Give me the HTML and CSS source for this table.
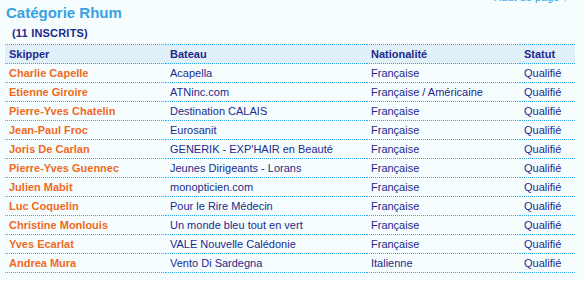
FILE: index.html
```html
<!DOCTYPE html>
<html lang="fr">
<head>
    <meta charset="UTF-8">
    <title>Catégorie Rhum</title>
    <link rel="stylesheet" href="styles.css">
</head>
<body>
    <div class="page">
        <a class="top-link" href="#">Haut de page ↑</a>
        <h2>Catégorie Rhum</h2>
        <p class="count">(11 INSCRITS)</p>
        <table class="list">
            <thead>
                <tr><th class="c1">Skipper</th><th class="c2">Bateau</th><th class="c3">Nationalité</th><th class="c4">Statut</th></tr>
            </thead>
            <tbody>
                <tr><td class="name">Charlie Capelle</td><td>Acapella</td><td>Française</td><td>Qualifié</td></tr>
                <tr><td class="name">Etienne Giroire</td><td>ATNinc.com</td><td>Française / Américaine</td><td>Qualifié</td></tr>
                <tr><td class="name">Pierre-Yves Chatelin</td><td>Destination CALAIS</td><td>Française</td><td>Qualifié</td></tr>
                <tr><td class="name">Jean-Paul Froc</td><td>Eurosanit</td><td>Française</td><td>Qualifié</td></tr>
                <tr><td class="name">Joris De Carlan</td><td>GENERIK - EXP'HAIR en Beauté</td><td>Française</td><td>Qualifié</td></tr>
                <tr><td class="name">Pierre-Yves Guennec</td><td>Jeunes Dirigeants - Lorans</td><td>Française</td><td>Qualifié</td></tr>
                <tr><td class="name">Julien Mabit</td><td>monopticien.com</td><td>Française</td><td>Qualifié</td></tr>
                <tr><td class="name">Luc Coquelin</td><td>Pour le Rire Médecin</td><td>Française</td><td>Qualifié</td></tr>
                <tr><td class="name">Christine Monlouis</td><td>Un monde bleu tout en vert</td><td>Française</td><td>Qualifié</td></tr>
                <tr><td class="name">Yves Ecarlat</td><td>VALE Nouvelle Calédonie</td><td>Française</td><td>Qualifié</td></tr>
                <tr><td class="name">Andrea Mura</td><td>Vento Di Sardegna</td><td>Italienne</td><td>Qualifié</td></tr>
            </tbody>
        </table>
    </div>
</body>
</html>
```

FILE: styles.css
```css
* {
    margin: 0;
    padding: 0;
    box-sizing: border-box;
    font-family: "Liberation Sans", Arial, sans-serif;
}

body {
    background-color: #F6FDFF;
    color: #1C2A8C;
    font-size: 11px;
}

.page {
    padding: 4px 8px 0 5px;
}

.top-link {
    display: block;
    text-align: right;
    height: 0;
    margin-top: -14px;
    margin-right: 7px;
    line-height: 14px;
    color: #2FA3E6;
    text-decoration: none;
    font-size: 11px;
}

h2 {
    color: #36A2E2;
    font-size: 15px;
    font-weight: bold;
    line-height: 17px;
    margin-top: 14px;
    padding-left: 1px;
}

.count {
    font-weight: bold;
    font-size: 11px;
    line-height: 13px;
    margin: 6px 0 4px 7px;
    letter-spacing: 0.2px;
}

.list {
    width: 570px;
    border-collapse: collapse;
}

.list th,
.list td {
    text-align: left;
    height: 19px;
    padding: 0 4px;
    border-bottom: 1px dotted #2FA8EA;
    white-space: nowrap;
}

.list th {
    background-color: #E2F0FA;
    border-top: 1px dotted #2FA8EA;
    font-weight: bold;
    font-size: 11px;
}

.c1 { width: 161px; }
.c2 { width: 201px; }
.c3 { width: 153px; }

.name {
    color: #F06A1E;
    font-weight: bold;
}
```
